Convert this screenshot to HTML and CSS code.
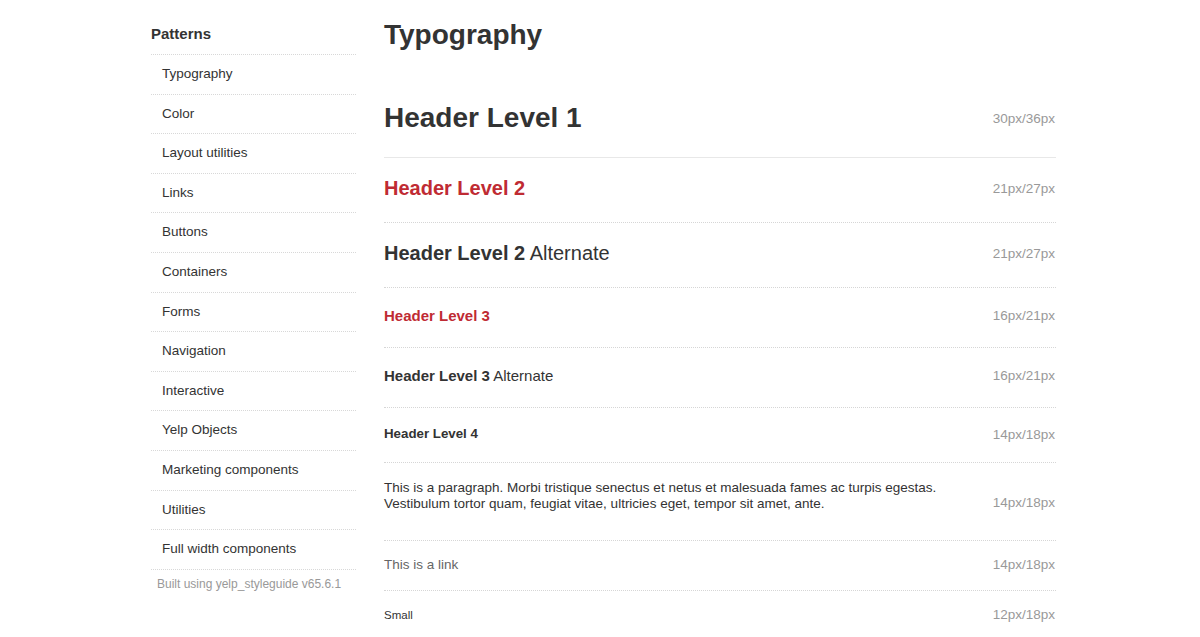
FILE: index.html
```html
<!DOCTYPE html>
<html lang="en">
<head>
<meta charset="utf-8">
<title>Typography - Yelp Styleguide</title>
<link rel="stylesheet" href="styles.css">
</head>
<body>
<div class="page">
  <aside class="sidebar">
    <h3 class="sidebar-title">Patterns</h3>
    <ul class="nav">
      <li><a href="#">Typography</a></li>
      <li><a href="#">Color</a></li>
      <li><a href="#">Layout utilities</a></li>
      <li><a href="#">Links</a></li>
      <li><a href="#">Buttons</a></li>
      <li><a href="#">Containers</a></li>
      <li><a href="#">Forms</a></li>
      <li><a href="#">Navigation</a></li>
      <li><a href="#">Interactive</a></li>
      <li><a href="#">Yelp Objects</a></li>
      <li><a href="#">Marketing components</a></li>
      <li><a href="#">Utilities</a></li>
      <li><a href="#">Full width components</a></li>
    </ul>
    <p class="built">Built using yelp_styleguide v65.6.1</p>
  </aside>
  <main class="main">
    <h1 class="page-title">Typography</h1>
    <div class="specimens">
      <div class="row row-h1">
        <div class="sample"><span class="h1">Header Level 1</span></div>
        <div class="spec">30px/36px</div>
      </div>
      <div class="row row-h2">
        <div class="sample"><span class="h2">Header Level 2</span></div>
        <div class="spec">21px/27px</div>
      </div>
      <div class="row row-h2">
        <div class="sample"><span class="h2 alt"><b>Header Level 2</b> Alternate</span></div>
        <div class="spec">21px/27px</div>
      </div>
      <div class="row row-h3">
        <div class="sample"><span class="h3">Header Level 3</span></div>
        <div class="spec">16px/21px</div>
      </div>
      <div class="row row-h3">
        <div class="sample"><span class="h3 alt"><b>Header Level 3</b> Alternate</span></div>
        <div class="spec">16px/21px</div>
      </div>
      <div class="row row-h4">
        <div class="sample"><span class="h4">Header Level 4</span></div>
        <div class="spec">14px/18px</div>
      </div>
      <div class="row row-p">
        <div class="sample"><p class="para">This is a paragraph. Morbi tristique senectus et netus et malesuada fames ac turpis egestas. Vestibulum tortor quam, feugiat vitae, ultricies eget, tempor sit amet, ante.</p></div>
        <div class="spec">14px/18px</div>
      </div>
      <div class="row row-link">
        <div class="sample"><a class="link" href="#">This is a link</a></div>
        <div class="spec">14px/18px</div>
      </div>
      <div class="row row-small">
        <div class="sample"><small class="small">Small</small></div>
        <div class="spec">12px/18px</div>
      </div>
    </div>
  </main>
</div>
</body>
</html>
```

FILE: styles.css
```css
* {
  box-sizing: border-box;
}

html, body {
  margin: 0;
  padding: 0;
  background: #fff;
}

body {
  font-family: "Liberation Sans", Arial, Helvetica, sans-serif;
  color: #333;
  overflow: hidden;
}

.page {
  display: flex;
  align-items: flex-start;
  gap: 28px;
  width: 905px;
  margin-left: 151px;
}

/* Sidebar */
.sidebar {
  width: 205px;
  flex: none;
  padding-top: 24px;
}

.sidebar-title {
  margin: 0;
  font-size: 15px;
  line-height: 20px;
  font-weight: bold;
  color: #333;
  padding-bottom: 10px;
  border-bottom: 1px dotted #d8d8d8;
}

.nav {
  list-style: none;
  margin: 0;
  padding: 0;
}

.nav li {
  border-bottom: 1px dotted #d8d8d8;
}

.nav a {
  display: block;
  padding: 10px 11px;
  font-size: 13.5px;
  line-height: 18.6px;
  color: #333;
  text-decoration: none;
}

.built {
  margin: 0;
  padding: 6px 6px 0;
  font-size: 12px;
  line-height: 16px;
  color: #999;
}

/* Main */
.main {
  flex: 1;
  min-width: 0;
  padding-top: 18px;
}

.page-title {
  margin: 0;
  font-size: 28px;
  line-height: 34px;
  font-weight: bold;
  color: #333;
}

.specimens {
  margin-top: 27px;
}

.row {
  display: flex;
  align-items: center;
  justify-content: space-between;
  gap: 20px;
  border-bottom: 1px dotted #d6d6d6;
}

.sample {
  flex: 1;
  min-width: 0;
}

.spec {
  flex: none;
  width: 90px;
  text-align: right;
  font-size: 13.5px;
  line-height: 17px;
  color: #999;
  padding-right: 1px;
}

.row-h1 {
  padding: 21px 0 21px;
  border-bottom: 1px solid #e8e8e8;
}

.h1 {
  display: block;
  font-size: 28px;
  line-height: 36px;
  font-weight: bold;
}

.row-h2 {
  padding: 17px 0 20px;
}

.h2 {
  display: block;
  font-size: 20px;
  line-height: 27px;
  font-weight: bold;
  color: #bf2b33;
}

.h2.alt,
.h3.alt {
  color: #333;
  font-weight: normal;
}

.h2.alt b,
.h3.alt b {
  font-weight: bold;
}

.row-h3 {
  padding: 17px 0 21px;
}

.h3 {
  display: block;
  font-size: 15px;
  line-height: 21px;
  font-weight: bold;
  color: #bf2b33;
}

.row-h4 {
  padding: 17px 0 19px;
}

.h4 {
  display: block;
  font-size: 13.3px;
  line-height: 18px;
  font-weight: bold;
}

.row-p {
  padding: 17px 0 15px;
}

.para {
  margin: 0 0 13px;
  font-size: 13.5px;
  line-height: 16px;
  max-width: 560px;
}

.row-link {
  padding: 14px 0 17px;
}

.link {
  font-size: 13.5px;
  line-height: 17px;
  color: #666;
  text-decoration: none;
}

.row-small {
  padding: 14px 0 15px;
  border-bottom: none;
}

.small {
  font-size: 11.5px;
  line-height: 18px;
  color: #333;
}
```
